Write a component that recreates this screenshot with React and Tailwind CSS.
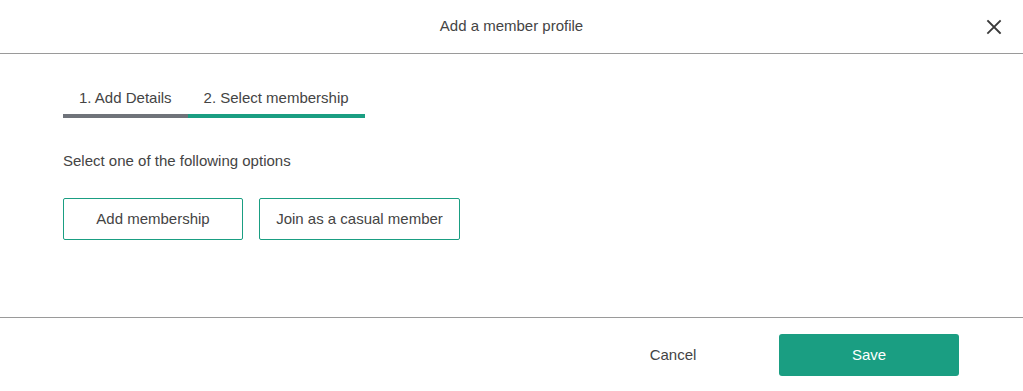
import React from "react";

export default function App() {
  return (
    <div className="w-[1023px] h-[391px] bg-white flex flex-col text-[#444] text-[15px]" style={{ fontFamily: '"Liberation Sans", Arial, sans-serif' }}>
      <div className="h-[54px] relative flex items-center justify-center border-b border-[#9a9a9a] shrink-0">
        <span className="text-[15px] text-[#444]">Add a member profile</span>
        <button className="absolute right-[20px] top-[18px] w-[18px] h-[18px] flex items-center justify-center">
          <svg width="16" height="16" viewBox="0 0 16 16" fill="none" stroke="#3a3a3a" strokeWidth="1.8" strokeLinecap="square">
            <path d="M2 2 L14 14 M14 2 L2 14" />
          </svg>
        </button>
      </div>
      <div className="flex-1 px-[63px] pt-[34px]">
        <div className="flex">
          <div className="flex flex-col items-center">
            <span className="px-[16px] leading-[20px] text-[#444]">1. Add Details</span>
            <div className="mt-[6px] h-[4px] w-full bg-[#6f737a]" />
          </div>
          <div className="flex flex-col items-center">
            <span className="px-[16px] leading-[20px] text-[#444]">2. Select membership</span>
            <div className="mt-[6px] h-[4px] w-full bg-[#1a9e82]" />
          </div>
        </div>
        <p className="mt-[33px] leading-[20px] text-[#444]">Select one of the following options</p>
        <div className="mt-[27px] flex gap-[16px]">
          <button className="w-[180px] h-[42px] border border-[#1a9e82] rounded-[2px] text-[#444] text-[15px]">Add membership</button>
          <button className="w-[201px] h-[42px] border border-[#1a9e82] rounded-[2px] text-[#444] text-[15px]">Join as a casual member</button>
        </div>
      </div>
      <div className="border-t border-[#9a9a9a] h-[74px] shrink-0 flex justify-end items-start pt-[16px] pr-[64px] gap-[16px]">
        <button className="w-[180px] h-[42px] text-[#444] text-[15px]">Cancel</button>
        <button className="w-[180px] h-[42px] bg-[#1a9e82] text-white rounded-[3px] text-[15px]">Save</button>
      </div>
    </div>
  );
}
